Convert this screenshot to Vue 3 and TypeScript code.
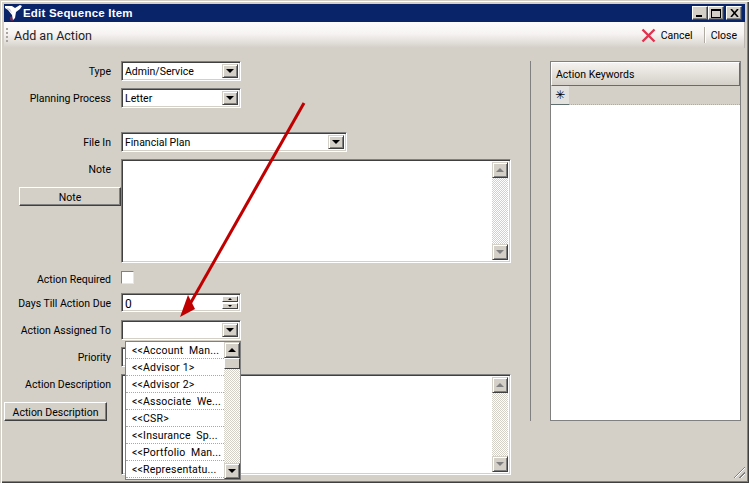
<script setup lang="ts">
const options: string[] = [
  '<<Account  Man...',
  '<<Advisor 1>',
  '<<Advisor 2>',
  '<<Associate  We...',
  '<<CSR>',
  '<<Insurance  Sp...',
  '<<Portfolio  Man...',
  '<<Representatu...'
]
</script>

<template>
  <div class="window">
    <header class="titlebar">
      <svg class="logo" width="17" height="18" viewBox="0 0 17 18">
        <path d="M5 13l3-1 1 4-2 1-2-1z" fill="#6d2a55" />
        <path d="M0 2L7 2L10 4L15 1L17 2L15 5L11 8L10 14L8 16L7 11L3 6L0 4Z" fill="#fff" />
        <path d="M1 3.500l4 1.500 2 4-3-3z" fill="#c4c4d2" />
      </svg>
      <span class="title">Edit Sequence Item</span>
      <div class="caption-buttons">
        <button class="cap"><span class="min"></span></button>
        <button class="cap"><span class="max"></span></button>
        <button class="cap close-cap">
          <svg width="9" height="8" viewBox="0 0 9 8"><path d="M1 0l7 8M8 0L1 8" stroke="#000" stroke-width="1.600" fill="none" /></svg>
        </button>
      </div>
    </header>

    <div class="toolbar">
      <div class="grip"><i></i><i></i><i></i><i></i></div>
      <span class="tool-title">Add an Action</span>
      <div class="tool-actions">
        <svg width="15" height="15" viewBox="0 0 15 15"><path d="M1.500 1.500l12 12M13.500 1.500l-12 12" stroke="#e0324f" stroke-width="2.400" fill="none" /></svg>
        <span class="cancel">Cancel</span>
        <span class="sep"></span>
        <span class="close">Close</span>
      </div>
    </div>

    <main class="content">
      <section class="form">
        <div class="row">
          <label class="lbl">Type</label>
          <div class="field combo w120"><span class="val">Admin/Service</span><span class="drop"><b class="down"></b></span></div>
        </div>
        <div class="row r-plan">
          <label class="lbl">Planning Process</label>
          <div class="field combo w120"><span class="val">Letter</span><span class="drop"><b class="down"></b></span></div>
        </div>
        <div class="row r-file">
          <label class="lbl">File In</label>
          <div class="field combo w226"><span class="val">Financial Plan</span><span class="drop"><b class="down"></b></span></div>
        </div>
        <div class="row r-note">
          <div class="lbl-col">
            <label class="lbl">Note</label>
            <button class="btn note-btn">Note</button>
          </div>
          <div class="field area h104">
            <div class="vscroll">
              <span class="sbtn"><b class="up grey"></b></span>
              <span class="track"></span>
              <span class="sbtn"><b class="down grey"></b></span>
            </div>
          </div>
        </div>
        <div class="row r-req">
          <label class="lbl">Action Required</label>
          <span class="check"></span>
        </div>
        <div class="row r-days">
          <label class="lbl">Days Till Action Due</label>
          <div class="field combo w120 h19">
            <span class="val val-num">0</span>
            <span class="spin">
              <span class="spin-b"><b class="up tiny"></b></span>
              <span class="spin-b"><b class="down tiny"></b></span>
            </span>
          </div>
        </div>
        <div class="row r-assign">
          <label class="lbl">Action Assigned To</label>
          <div class="field combo w120"><span class="val"></span><span class="drop"><b class="down"></b></span></div>
        </div>
        <div class="row r-prio">
          <label class="lbl">Priority</label>
          <div class="field combo w120"><span class="val"></span><span class="drop"><b class="down"></b></span></div>
        </div>
        <div class="row r-desc">
          <div class="lbl-col">
            <label class="lbl">Action Description</label>
            <button class="btn desc-btn">Action Description</button>
          </div>
          <div class="field area h101">
            <div class="vscroll">
              <span class="sbtn"><b class="up grey"></b></span>
              <span class="track"></span>
              <span class="sbtn"><b class="down grey"></b></span>
            </div>
          </div>
        </div>
      </section>

      <div class="divider"></div>

      <aside class="keywords">
        <div class="kw-head">Action Keywords</div>
        <div class="kw-new"><span class="kw-star">✳</span></div>
        <div class="kw-body"></div>
      </aside>
    </main>

    <div class="popup">
      <ul class="popup-list">
        <li v-for="o in options" :key="o">{{ o }}</li>
      </ul>
      <div class="popup-scroll">
        <span class="sbtn"><b class="up"></b></span>
        <span class="thumb"></span>
        <span class="track"></span>
        <span class="sbtn"><b class="down"></b></span>
      </div>
    </div>

    <svg class="arrow" width="749" height="483" viewBox="0 0 749 483">
      <path d="M304 103L190 304" stroke="#c00000" stroke-width="3" fill="none" />
      <path d="M180 317L188 295L195 309Z" fill="#c00000" />
    </svg>

    <div class="resize"></div>
  </div>
</template>

<style>
html, body { margin: 0; padding: 0; background: #d4d0c8; }
</style>

<style scoped>
* { box-sizing: border-box; }
.window {
  position: relative;
  width: 749px;
  height: 483px;
  overflow: hidden;
  background: #d4d0c8;
  padding: 4px 4px 4px 4px;
  box-shadow: inset 0 1px 0 #d4d0c8, inset 1px 0 0 #d4d0c8, inset 0 2px 0 #fff, inset 2px 0 0 #fff, inset -1px 0 0 #404040, inset 0 -1px 0 #404040, inset -2px 0 0 #808080, inset 0 -2px 0 #808080;
  font-family: Roboto, "Liberation Sans", sans-serif;
  font-size: 10.500px;
  color: #000;
  display: flex;
  flex-direction: column;
}
.titlebar {
  height: 18px;
  flex: none;
  background: #0a246a;
  display: flex;
  align-items: center;
  position: relative;
}
.logo { margin-left: 1px; flex: none; }
.title {
  margin-left: 1px;
  color: #fff;
  font: bold 11.500px "Liberation Sans", sans-serif;
  letter-spacing: 0.200px;
}
.caption-buttons { margin-left: auto; display: flex; margin-right: 3px; }
.cap {
  width: 16px;
  height: 14px;
  padding: 0;
  background: #d4d0c8;
  border: 1px solid;
  border-color: #fff #404040 #404040 #fff;
  box-shadow: inset -1px -1px 0 #808080;
  display: flex;
  align-items: center;
  justify-content: center;
  position: relative;
}
.close-cap { margin-left: 2px; }
.min { display: block; width: 6px; height: 2px; background: #000; margin-top: 6px; margin-right: 2px; }
.max { display: block; width: 10px; height: 9px; border: 1px solid #000; border-top-width: 2px; }
.toolbar {
  height: 26px;
  flex: none;
  display: flex;
  align-items: center;
  background: linear-gradient(#fdfbfb 0%, #f7f3f3 45%, #d4d0c8 100%);
  border-right: 1px solid #bdb9b2;
}
.grip { margin-left: 2px; width: 2px; display: flex; flex-direction: column; gap: 2px; }
.grip i { display: block; width: 2px; height: 2px; background: #a8a59f; }
.tool-title { margin-left: 6px; font-size: 12.500px; color: #222; }
.tool-actions { margin-left: auto; display: flex; align-items: center; margin-right: 7px; }
.cancel { margin-left: 5px; }
.sep { width: 1px; height: 16px; background: #b0aca4; margin: 0 6px 0 11px; box-shadow: 1px 0 0 #fff; }
.content { flex: 1; display: flex; align-items: flex-start; min-height: 0; }
.form { width: 526px; padding-top: 13px; display: flex; flex-direction: column; flex: none; }
.row { display: flex; align-items: flex-start; }
.lbl {
  width: 107px;
  height: 19px;
  flex: none;
  text-align: right;
  margin-right: 10px;
  line-height: 21px;
  white-space: nowrap;
  display: block;
}
.lbl-col { width: 117px; flex: none; display: flex; flex-direction: column; }
.lbl-col .lbl { height: 20px; }
.r-plan { margin-top: 7px; }
.r-file { margin-top: 24px; }
.r-note { margin-top: 7px; }
.r-req { margin-top: 8px; height: 13px; align-items: flex-start; }
.r-req .lbl { height: 11px; line-height: 13px; margin-top: 2px; }
.r-days { margin-top: 9px; height: 19px; }
.r-assign { margin-top: 8px; }
.r-prio { margin-top: 7px; }
.r-desc { margin-top: 7px; }
.field {
  background: #fff;
  border: 1px solid;
  border-color: #808080 #fff #fff #808080;
  box-shadow: inset 1px 1px 0 #404040, inset -1px -1px 0 #d4d0c8;
}
.combo { height: 20px; display: flex; padding: 2px; align-items: stretch; }
.w120 { width: 120px; }
.w226 { width: 226px; }
.h19 { height: 19px; }
.val { flex: 1; padding-left: 1px; line-height: 16px; white-space: nowrap; }
.val-num { font-size: 12px; }
.drop, .sbtn {
  width: 16px;
  flex: none;
  background: #d4d0c8;
  border: 1px solid;
  border-color: #d4d0c8 #404040 #404040 #d4d0c8;
  box-shadow: inset 1px 1px 0 #fff, inset -1px -1px 0 #808080;
  display: flex;
  align-items: center;
  justify-content: center;
}
b.down, b.up { display: block; width: 0; height: 0; border-left: 4px solid transparent; border-right: 4px solid transparent; }
b.down { border-top: 4px solid #000; }
b.up { border-bottom: 4px solid #000; }
b.grey.down { border-top-color: #808080; }
b.grey.up { border-bottom-color: #808080; }
b.tiny { border-left-width: 2px; border-right-width: 2px; }
b.tiny.down { border-top-width: 2px; }
b.tiny.up { border-bottom-width: 2px; }
.spin { width: 16px; flex: none; display: flex; flex-direction: column; gap: 1px; }
.spin-b {
  flex: 1;
  background: #d4d0c8;
  border: 1px solid;
  border-color: #fff #404040 #404040 #fff;
  display: flex;
  align-items: center;
  justify-content: center;
}
.area { width: 390px; display: flex; justify-content: flex-end; padding: 2px; }
.h104 { height: 104px; }
.h101 { height: 101px; }
.vscroll, .popup-scroll { width: 16px; flex: none; display: flex; flex-direction: column; }
.vscroll .sbtn, .popup-scroll .sbtn { height: 16px; width: 16px; }
.track {
  flex: 1;
  background: repeating-conic-gradient(#d4d0c8 0 25%, #fff 0 50%) 0 0 / 2px 2px;
}
.check { width: 13px; height: 13px; background: #fff; border: 1px solid; border-color: #808080 #e8e6e2 #e8e6e2 #808080; }
.btn {
  background: #d4d0c8;
  font: inherit;
  color: #000;
  padding: 0;
  border: 1px solid;
  border-color: #fff #404040 #404040 #fff;
  box-shadow: inset -1px -1px 0 #808080;
}
.note-btn { width: 102px; height: 19px; margin: 8px 0 0 15px; padding-top: 2px; }
.desc-btn { width: 103px; height: 19px; margin-top: 8px; padding-top: 1px; }
.divider { width: 1px; height: 360px; margin-top: 13px; background: #808080; flex: none; }
.keywords {
  width: 191px;
  height: 360px;
  margin: 13px 0 0 19px;
  border: 1px solid #808080;
  background: #fff;
  flex: none;
  display: flex;
  flex-direction: column;
}
.kw-head {
  height: 24px;
  padding-left: 4px;
  line-height: 24px;
  background: linear-gradient(#f4f2ef, #d4d0c8);
  border: 1px solid;
  border-color: #fff #5f6f6f #5f6f6f #fff;
  flex: none;
}
.kw-new { height: 19px; background: #d4d0c8; flex: none; border-bottom: 1px dotted #b0aca4; }
.kw-star {
  display: flex;
  width: 18px;
  height: 19px;
  align-items: center;
  justify-content: center;
  background: #e4e2de;
  border-bottom: 1px solid #5f6f6f;
  font: 12px "DejaVu Sans", sans-serif;
}
.kw-body { flex: 1; background: #fff; }
.popup {
  position: absolute;
  left: 125px;
  top: 341px;
  width: 116px;
  height: 139px;
  background: #fff;
  border: 1px solid #808080;
  display: flex;
}
.popup-list { list-style: none; margin: 0; padding: 0; flex: 1; min-width: 0; }
.popup-list li {
  height: 17px;
  line-height: 18px;
  padding-left: 6px;
  border-bottom: 1px dotted #a8a8a8;
  white-space: pre;
  letter-spacing: 0.200px;
}
.popup-scroll { width: 16px; }
.thumb {
  height: 11px;
  flex: none;
  background: #d4d0c8;
  border: 1px solid;
  border-color: #fff #404040 #404040 #fff;
}
.arrow { position: absolute; left: 0; top: 0; pointer-events: none; }
.resize {
  position: absolute;
  right: 4px;
  bottom: 5px;
  width: 13px;
  height: 13px;
  background: repeating-linear-gradient(135deg, transparent 0 2px, #808080 2px 3px, #fff 3px 4px);
  clip-path: polygon(100% 0, 100% 100%, 0 100%);
}
</style>
